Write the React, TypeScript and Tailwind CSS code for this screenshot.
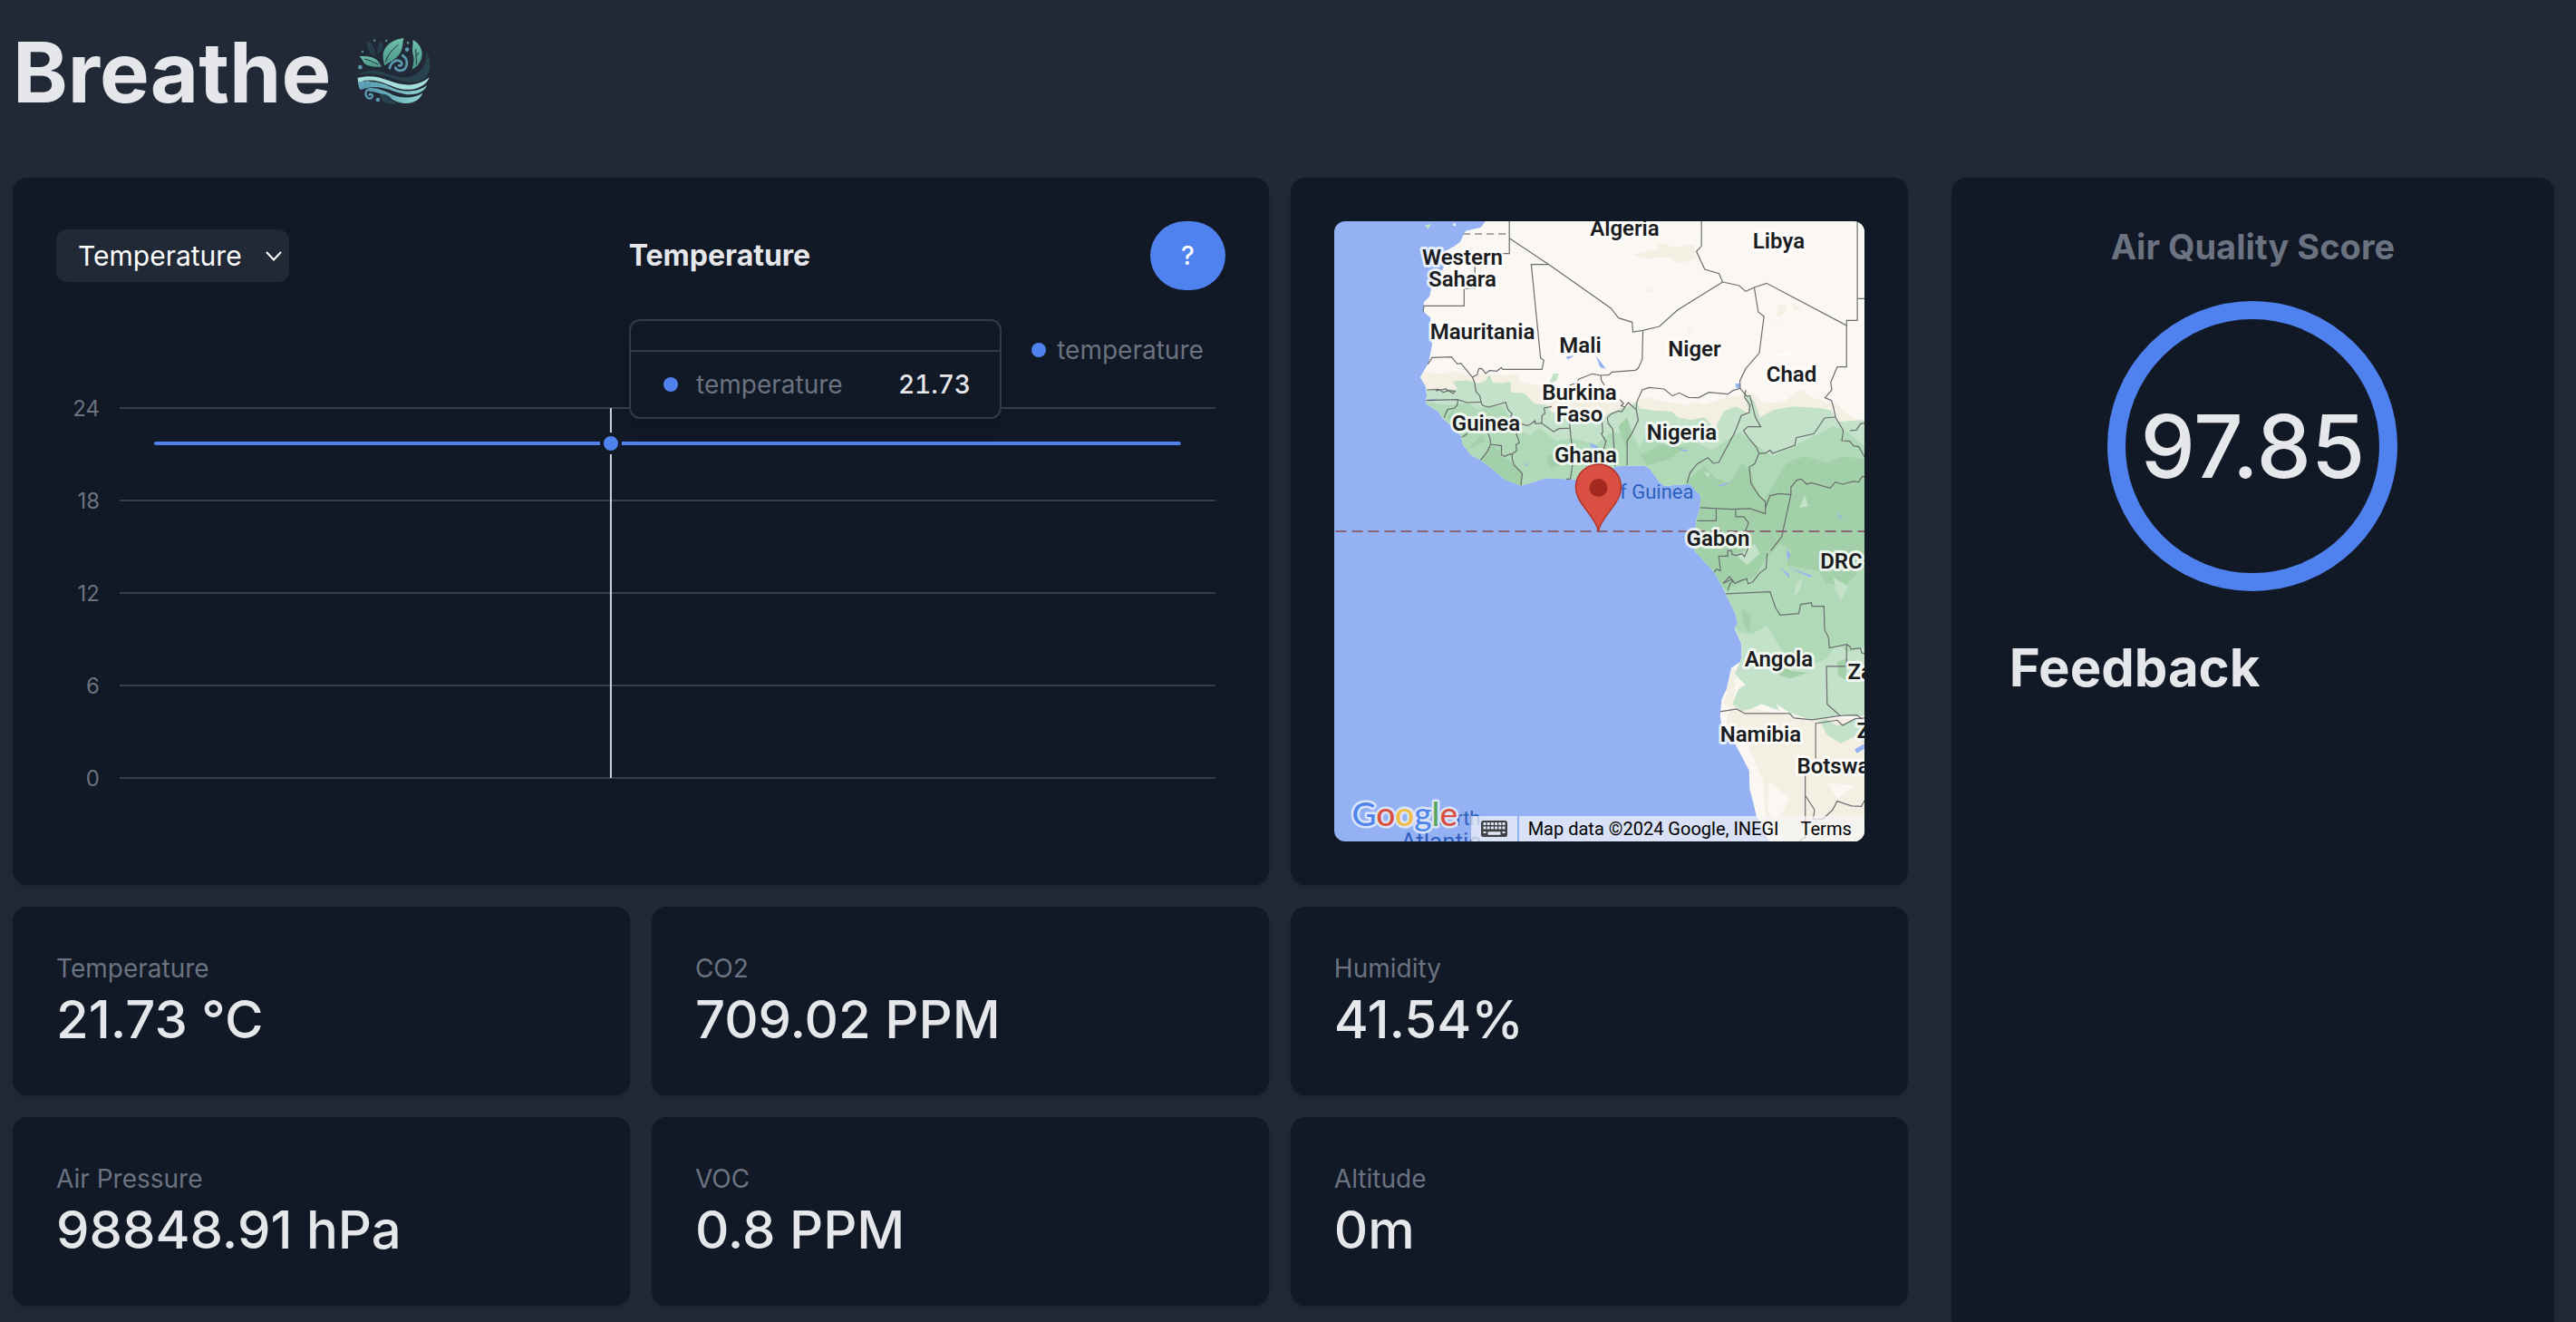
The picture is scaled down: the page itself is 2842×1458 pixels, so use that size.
import { useState } from 'react';

interface Stat {
  label: string;
  value: string;
}

const STATS: Stat[] = [
  { label: 'Temperature', value: '21.73 °C' },
  { label: 'CO2', value: '709.02 PPM' },
  { label: 'Humidity', value: '41.54%' },
  { label: 'Air Pressure', value: '98848.91 hPa' },
  { label: 'VOC', value: '0.8 PPM' },
  { label: 'Altitude', value: '0m' },
];

const METRICS = ['Temperature', 'CO2', 'Humidity', 'Air Pressure', 'VOC', 'Altitude'];

const TICKS = [
  { label: '24', y: 46 },
  { label: '18', y: 148 },
  { label: '12', y: 250 },
  { label: '6', y: 352 },
  { label: '0', y: 454 },
];

const COUNTRIES: { name: string; x: number; y: number; anchor?: 'start' | 'middle' }[] = [
  { name: 'Algeria', x: 321, y: 16 },
  { name: 'Libya', x: 491, y: 30 },
  { name: 'Western', x: 142, y: 48 },
  { name: 'Sahara', x: 142, y: 72 },
  { name: 'Mauritania', x: 164, y: 130 },
  { name: 'Mali', x: 272, y: 145 },
  { name: 'Niger', x: 398, y: 149 },
  { name: 'Chad', x: 505, y: 177 },
  { name: 'Burkina', x: 271, y: 197 },
  { name: 'Faso', x: 271, y: 221 },
  { name: 'Guinea', x: 168, y: 231 },
  { name: 'Nigeria', x: 384, y: 241 },
  { name: 'Ghana', x: 278, y: 266 },
  { name: 'Gabon', x: 424, y: 358 },
  { name: 'DRC', x: 560, y: 383 },
  { name: 'Angola', x: 491, y: 491 },
  { name: 'Zambia', x: 567, y: 505, anchor: 'start' },
  { name: 'Namibia', x: 471, y: 574 },
  { name: 'Zimbabwe', x: 577, y: 570, anchor: 'start' },
  { name: 'Botswana', x: 511, y: 609, anchor: 'start' },
];

const LAND =
  'M450 42L438 62L395 74L380 110L365 124L340 140L345 165L330 205L320 210L300 262L295 290L279 310L277 340L298 362L295 400L302 450L292 510L269 558L285 590L287 620L284 645L320 672L330 692L352 715L383 752L387 780L410 815L437 832L470 862L505 896L549 917L620 892L700 896L760 880L815 853L890 850L908 860L935 905L950 917L1020 911L1050 950L1048 990L1038 1030L1036 1090L1032 1130L1088 1204L1112 1255L1122 1280L1148 1345L1152 1375L1144 1390L1163 1440L1163 1485L1160 1500L1135 1520L1122 1590L1108 1625L1104 1680L1108 1710L1145 1770L1185 1860L1186 1920L1195 1960L1205 2010L1240 2094H1507V42Z';

const BORDERS = [
  'M517 42V149H421V265H391V322H279L277 343',
  'M517 98L627 185L800 330L821 362L859 376L861 408L889 403L935 390L985 336L1111 243L1101 215L1061 201L1038 142L1052 124V42',
  'M627 185H578L604 495L613 502L608 532H498L495 526L482 538L462 536L451 546L440 529L432 530L427 550L414 558L382 512L372 514L356 491L302 493L290 515',
  'M889 403L887 500L876 528L868 535L803 541L795 550L772 552L748 547L710 565L705 577L685 585L683 612M635 655L614 660L616 678L608 685L607 710L640 738L656 728L684 727',
  'M772 552L773 568L782 585',
  'M1111 243L1157 255L1175 274L1199 261L1233 247L1456 387V370H1486V42M1486 298H1507',
  'M1199 261L1210 342L1226 357L1213 478L1175 530L1159 570L1160 595L1140 602L1125 614L1073 608L1044 626L1016 625L990 610L971 620L948 597L906 592L887 600L872 640L870 665L876 700L858 745L845 768V850',
  'M1456 387V524H1430L1412 575L1415 600L1396 626L1414 635L1420 660L1425 690L1447 735L1443 768L1465 770L1475 785L1490 788L1507 824',
  'M1425 690L1395 693L1365 745L1316 758L1312 783L1250 810L1243 800L1229 810L1212 810L1205 790L1185 762L1169 735L1181 722H1217L1202 690L1187 620L1177 620L1160 595',
  'M1175 600L1172 625L1187 650L1185 675L1163 685L1145 740L1100 840L1085 843L1070 824L1040 845L1020 875L1012 908',
  'M1212 810L1200 845L1185 855L1190 910L1212 950L1230 970V1010L1187 993L1135 995L1048 990M1093 993V1033H1040M1147 995V1020L1170 1020L1183 1040L1175 1065L1178 1090',
  'M1230 990L1243 950L1270 943L1301 947L1280 1060L1276 1085L1245 1132M1235 1140L1232 1190L1215 1205L1195 1235L1182 1242L1178 1225L1160 1232L1145 1240L1135 1228L1112 1240',
  'M1301 947L1301 922L1318 898L1330 895L1345 912L1358 907L1410 925L1425 905L1445 912L1475 903L1490 905L1500 886L1507 888',
  'M1465 735L1483 733L1495 712L1507 710',
  'M414 558L420 575L424 605L435 620L438 640L400 642L372 632L285 635M287 600L320 598L333 608L350 602L366 605L360 612L340 597L312 603',
  'M374 632L372 650L365 660L345 665L335 692M438 640L443 652L460 657L507 641L513 665L525 680L520 690L535 700L550 712L565 718L575 715L588 702L590 712L607 710',
  'M545 725L535 740L545 775L535 782L538 800L525 812L512 815L505 820L495 815L495 785L465 780L463 760L458 745M385 757L400 745M465 780L455 805L437 832M525 812L525 830L530 848L553 877L549 917',
  'M684 700L687 740L695 830L687 895L675 895M820 670L800 680L790 692L792 710L805 730L812 853M775 700L777 740L773 745L786 770L780 795',
  'M870 665L848 642L830 672L820 670M825 632L835 645L828 652L840 658',
  'M1088 1204L1093 1193L1105 1198L1100 1150L1125 1150L1125 1132L1135 1132L1138 1145L1150 1148L1165 1142L1172 1152L1183 1120M1112 1240L1130 1218L1140 1232L1132 1240L1125 1265',
  'M1120 1275L1243 1268L1258 1320L1271 1345L1323 1340L1328 1310L1358 1304L1360 1316H1393L1395 1394L1406 1420L1408 1454L1456 1442V1515H1400L1402 1640L1438 1678L1360 1692L1310 1686L1297 1671H1173L1150 1656L1104 1665',
  'M1456 1442L1465 1448L1468 1458L1495 1455L1498 1470L1507 1473M1438 1678L1485 1676L1500 1690M1370 1820V1704L1430 1693L1445 1710L1480 1688L1507 1686',
  'M1341 1870V2080L1325 2094M1341 1942L1367 1990L1363 2020H1390L1417 1990L1430 1961L1470 1977L1497 1978L1507 1958',
];

function BreatheLogo() {
  return (
    <svg viewBox="36 30 250 235" className="h-[78px] w-[83px]" fill="none" aria-hidden="true">
      <defs>
        <linearGradient id="leaf" x1="0" y1="0" x2="0" y2="1">
          <stop offset="0" stopColor="#6cc0aa" />
          <stop offset="1" stopColor="#4b9587" />
        </linearGradient>
        <linearGradient id="wave" x1="0" y1="0" x2="1" y2="0">
          <stop offset="0" stopColor="#5598ad" />
          <stop offset="1" stopColor="#8fd3cf" />
        </linearGradient>
      </defs>
      <g fill="url(#leaf)">
        <path d="M194 36C160 40 126 60 125 96C125 108 128 118 130 128C140 118 172 108 184 82C192 64 190 50 194 36Z" />
        <path d="M224 42C246 52 258 76 254 98C251 118 236 134 222 140C226 120 230 108 225 92C220 74 226 60 224 42Z" />
        <path d="M45 97C70 94 92 98 104 108C112 115 116 124 121 131C100 133 74 132 62 119C56 110 54 101 45 97Z" />
      </g>
      <path d="M176 58C160 72 140 88 134 116M234 72L236 124M236 96L244 84M64 106C80 108 92 116 110 124" stroke="#222936" strokeWidth="3" />
      <path d="M72 44C90 54 100 68 98 96C82 86 70 70 72 44ZM122 46C112 56 102 70 107 90C120 82 127 66 122 46Z" fill="#28434f" />
      <path d="M82 62L94 92M116 62L109 84" stroke="#222936" strokeWidth="2" />
      <path d="M147 136C150 116 172 104 184 114C192 121 186 130 178 127M190 94C206 102 208 124 199 136C190 148 170 146 166 134" stroke="#5a99ae" strokeWidth="8" strokeLinecap="round" />
      <path d="M40 160C66 142 94 140 122 148C156 158 194 176 226 160C258 144 270 120 270 82C284 112 288 150 262 170C224 198 174 174 140 164C108 154 70 150 40 160Z" fill="#28434f" />
      <path d="M41 168C80 158 112 164 146 178C190 196 240 198 279 166C270 194 232 212 190 206C144 198 116 168 56 178C66 184 76 180 92 180C64 184 56 196 50 208C43 196 42 182 41 168Z" fill="#a5dfdc" />
      <path d="M54 190C88 172 126 186 154 200C192 218 244 216 272 192C262 216 232 228 196 222C150 214 112 184 52 208Z" fill="url(#wave)" />
      <path d="M43 180C50 182 64 180 82 178C66 186 56 196 50 208C46 200 43 190 43 180Z" fill="#5f9fb8" />
      <path d="M74 204C100 196 130 212 156 224C188 238 232 236 257 218C246 244 222 256 190 252C152 246 116 210 80 214Z" fill="url(#wave)" />
      <path d="M92 206C74 202 66 212 68 224C71 240 90 240 90 228C90 222 82 220 80 225" stroke="#5a99ae" strokeWidth="7" strokeLinecap="round" />
      <path d="M112 222C136 218 148 230 156 240C160 248 168 252 174 252C152 260 124 252 120 238C118 230 116 226 112 222Z" fill="#28434f" />
      <path d="M130 230L158 248" stroke="#222936" strokeWidth="2" />
      <g fill="#5a99ae">
        <circle cx="49" cy="133" r="7" />
        <circle cx="205" cy="74" r="7" />
        <circle cx="108" cy="241" r="7" />
        <circle cx="57" cy="81" r="3.5" />
        <circle cx="97" cy="44" r="3.5" />
        <circle cx="136" cy="45" r="3.5" />
        <circle cx="208" cy="52" r="4" />
      </g>
    </svg>
  );
}

function TrendChart() {
  return (
    <div className="relative">
      <div className="mt-12 flex items-center justify-end gap-3 pr-6 text-[28px] leading-9 text-[#6b7280]">
        <span className="h-4 w-4 rounded-full bg-[#4f82ee]" />
        temperature
      </div>
      <svg viewBox="0 0 1290 524" className="block w-full" role="img" aria-label="Temperature over time">
        {TICKS.map(tick => (
          <g key={tick.label}>
            <line x1="70" x2="1279" y1={tick.y} y2={tick.y} stroke="#373d4a" strokeWidth="2" />
            <text x="48" y={tick.y + 9} textAnchor="end" fontSize="24" fill="#6b7280">
              {tick.label}
            </text>
          </g>
        ))}
        <line x1="110" x2="1239" y1="85" y2="85" stroke="#4f82ee" strokeWidth="4" strokeLinecap="round" />
        <line x1="612" x2="612" y1="46" y2="454" stroke="#d1d5db" strokeWidth="2" />
        <circle cx="612" cy="85" r="10" fill="#4f82ee" stroke="#111826" strokeWidth="4" />
      </svg>

      {/* Tooltip */}
      <div className="absolute left-[49%] -top-4 w-[411px] rounded-xl border-2 border-[#333a47] bg-[#111826] shadow-lg">
        <div className="h-[34px] border-b-2 border-[#333a47]" />
        <div className="flex items-center py-4 pr-8 pl-9 text-[28px] leading-10">
          <span className="h-4 w-4 rounded-full bg-[#4f82ee]" />
          <span className="ml-5 text-[#6b7280]">temperature</span>
          <span className="ml-auto font-medium text-[#e5e7eb] tabular-nums">21.73</span>
        </div>
      </div>
    </div>
  );
}

function LocationMap() {
  return (
    <div className="relative h-[684px] overflow-hidden rounded-xl bg-[#94b2f3] font-[Roboto,sans-serif]">
      <svg viewBox="0 0 586 684" preserveAspectRatio="xMidYMid slice" className="h-full w-full" role="img" aria-label="Map">
        <defs>
          <clipPath id="land">
            <path d={LAND} />
          </clipPath>
        </defs>
        <g transform="scale(0.3962 0.3333) translate(-28 -42)">
          <path d={LAND} fill="#fbf8f3" />
          <g clipPath="url(#land)">
            {/* Dry belts */}
            <path
              d="M260 558L276 540L330 548L364 538L420 558L432 545L500 552L540 548L545 575L620 590L700 590L770 640L800 640L870 640L900 625L950 640L1010 650L1030 638L1060 650L1120 625L1160 620L1180 600L1225 645L1280 640L1330 598L1350 620L1400 640L1430 650L1470 690L1507 705V780H260ZM1135 1520L1150 1525L1140 1640L1300 1680L1507 1690V2094H1290L1270 2050L1230 2030L1225 1900L1200 1830L1180 1770L1140 1750L1120 1700L1130 1650L1115 1640Z"
              fill="#f4efe3"
            />
            <path d="M862 152L905 140L935 135L925 112L980 128L1030 120L1040 165L990 182L960 160L900 165ZM1265 320L1290 318L1280 350L1262 360ZM1305 310L1330 330L1310 335ZM1248 358L1275 388L1258 372ZM895 268H918L910 276ZM1012 398L1030 410L1015 412ZM1350 1850L1390 1880L1360 1900Z" fill="#f4efe3" />
            <path d="M1240 1900L1300 1950L1260 2030L1235 1990ZM1400 1900L1480 1910L1430 1950Z" fill="#fbf8f3" />
            {/* Vegetation, lightest to densest */}
            <path
              d="M260 645L287 600L330 600L372 598L360 572L400 568L430 578L450 570L462 548L470 575L495 578L520 572L522 608L560 612L585 645L620 650L635 675L690 670L700 690L770 700L790 680L830 660L850 655L872 640L880 662L920 668L970 672L985 690L1020 700L1060 690L1090 728L1115 670L1150 655L1185 680L1172 610L1200 640L1215 690L1255 665L1310 655L1380 660L1412 668L1430 705L1507 700V1680L1440 1676L1360 1692L1300 1670L1260 1640L1270 1662L1220 1640L1190 1655L1165 1662L1138 1640L1155 1590L1175 1575L1160 1560L1145 1540L1160 1500L1120 1500L900 1100L260 800Z"
              fill="#c3e2c9"
            />
            <path d="M628 575L640 545L655 545L648 570L630 580ZM1360 1700L1400 1690L1430 1712L1480 1690L1507 1700V1770L1480 1745L1440 1770L1400 1740L1385 1700Z" fill="#c3e2c9" />
            <path
              d="M280 640L345 650L400 642L430 665L460 650L500 655L515 690L540 735L575 750L600 725L650 770L690 760L760 780L800 740L860 750L880 790L900 740L960 790L1030 770L1080 800L1130 760L1160 740L1200 780L1250 820L1320 780L1420 720L1460 740L1507 790V1450L1460 1470L1430 1440L1400 1490L1340 1520L1280 1470L1235 1380L1190 1410L1155 1400L1100 1300L900 1000L500 950L280 700Z"
              fill="#b0dab7"
            />
            <path
              d="M437 832L465 782L490 800L495 820L520 835L555 880L545 940L480 900ZM820 720L845 690L860 745L840 790ZM1000 915L1060 850L1090 890L1130 910L1165 840L1190 870L1200 920L1225 965L1290 840L1340 820L1400 840L1450 820L1507 830V1180L1450 1250L1400 1240L1380 1200L1290 1180L1300 1130L1270 1110L1230 1160L1200 1220L1120 1260L1020 1140Z"
              fill="#a2d0a8"
            />
            <path d="M345 690L370 655L350 700ZM395 800L440 750L450 770ZM620 820L650 800L660 850L630 860ZM880 815L940 780L1010 790L960 830L900 850ZM1165 1325L1190 1350L1185 1400L1170 1380ZM1235 1470L1300 1530L1350 1535L1300 1555L1270 1545ZM1430 1500L1455 1490V1560L1432 1545Z" fill="#a2d0a8" />
            <path d="M1150 1150L1200 1110L1215 1140L1180 1180ZM1315 1240L1335 1220L1325 1265L1310 1280ZM1420 1220L1460 1250L1440 1300L1425 1260ZM1340 950L1350 985L1325 990ZM1060 870L1075 875L1070 892Z" fill="#c3e2c9" />
            {/* Lakes and rivers */}
            <path d="M675 490L698 487L680 500ZM757 485L786 530L770 525ZM1146 580L1158 578L1160 598L1148 592ZM740 775L765 790L760 798L745 790ZM560 840L568 848L562 852ZM1288 1125L1300 1145L1292 1165ZM1270 1185L1296 1210V1222ZM1290 1185L1360 1215L1355 1220ZM1478 1790L1505 1772V1788L1485 1802ZM1430 1005L1447 1028L1436 1022ZM1095 918L1143 900L1110 918ZM985 795L1018 800L1005 804ZM287 632L320 628L300 638Z" fill="#94b2f3" />
            <path d="M1258 482L1300 474L1296 486L1262 488Z" fill="#ffffff" />
          </g>
          <path d="M282 55L300 52L290 68Z" fill="#c3e2c9" />
          <path d="M358 55L366 46L368 58Z" fill="#fbf8f3" />
          <path d="M388 84H516" fill="none" stroke="#a8a8a8" strokeWidth="2" strokeDasharray="8 5" vectorEffect="non-scaling-stroke" />
          {BORDERS.map(d => (
            <path key={d} d={d} fill="none" stroke="#6b6e70" strokeWidth="1.2" vectorEffect="non-scaling-stroke" />
          ))}
        </g>

        <line x1="2" x2="586" y1="342" y2="342" stroke="#8b6478" strokeWidth="2" strokeDasharray="12 6" />

        <g fontSize="22" fill="#2f5fbd">
          <text x="397" y="306" textAnchor="end">of Guinea</text>
          <text x="162" y="666" textAnchor="end">North</text>
          <text x="74" y="693" fontSize="26">Atlantic</text>
        </g>

        <g fontSize="24" fontWeight="600" fill="#1a1c20" stroke="#ffffff" strokeOpacity="0.8" strokeWidth="6" strokeLinejoin="round" paintOrder="stroke">
          {COUNTRIES.map(c => (
            <text key={c.name} x={c.x} y={c.y} textAnchor={c.anchor ?? 'middle'}>
              {c.name}
            </text>
          ))}
        </g>

        {/* Marker */}
        <path d="M292 342C289 325 267 312 267 293A25 25 0 0 1 317 293C317 312 295 325 292 342Z" fill="#d94f41" stroke="#b3342b" strokeWidth="1.5" />
        <circle cx="292" cy="294" r="10" fill="#a3281f" />

        <g fontFamily="Lato, sans-serif" fontSize="37" fontWeight="500" stroke="#dce5fa" strokeWidth="5" strokeLinejoin="round" paintOrder="stroke">
          <text x="20" y="667">
            <tspan fill="#5086ec">G</tspan>
            <tspan fill="#d9503f">o</tspan>
            <tspan fill="#f1bd42">o</tspan>
            <tspan fill="#5086ec">g</tspan>
            <tspan fill="#58a55c">l</tspan>
            <tspan fill="#d9503f">e</tspan>
          </text>
        </g>
      </svg>

      {/* Attribution strip */}
      <div className="absolute right-0 bottom-0 flex h-7 gap-0.5 text-xl leading-7 text-black">
        <button aria-label="Keyboard shortcuts" className="flex w-[51px] items-center justify-center bg-[#f5f5f5]/70">
          <svg viewBox="0 0 29 18" className="h-[18px] w-[29px]">
            <rect width="29" height="18" rx="2.5" fill="#3c4043" />
            <path d="M2.5 3.5H27M2.5 8H27" stroke="#dfe6f6" strokeWidth="3" strokeDasharray="3 1.2" />
            <path d="M2.5 13H5.5M23.5 13H26.5" stroke="#dfe6f6" strokeWidth="2" />
            <path d="M7.5 14H21.5" stroke="#dfe6f6" strokeWidth="3.6" />
          </svg>
        </button>
        <div className="flex gap-6 bg-[#f5f5f5]/70 pr-3.5 pl-2.5">
          <span>Map data ©2024 Google, INEGI</span>
          <a href="#terms">Terms</a>
        </div>
      </div>
    </div>
  );
}

function StatCard({ label, value }: Stat) {
  return (
    <div className="rounded-2xl bg-[#111826] p-12 shadow-md">
      <p className="text-[28px] leading-10 text-[#6b7280]">{label}</p>
      <p className="text-[58px] leading-[72px] font-medium">{value}</p>
    </div>
  );
}

export default function App() {
  const [metric, setMetric] = useState('Temperature');

  return (
    <div className="flex min-h-screen flex-col bg-[#222936] pr-6 pl-[14px] font-[Inter,sans-serif] text-[#e5e7eb]">
      <header className="flex h-[196px] items-start gap-7 pt-8">
        <h1 className="text-[92px] leading-[96px] font-bold">Breathe</h1>
        <div className="pt-2">
          <BreatheLogo />
        </div>
      </header>

      <main className="grid flex-1 grid-cols-[22fr_7fr] gap-12">
        <div className="grid grid-cols-3 content-start gap-6">
          <section className="col-span-2 rounded-2xl bg-[#111826] p-12 shadow-md">
            <div className="flex items-center justify-between">
              <div className="relative">
                <select
                  aria-label="Metric"
                  value={metric}
                  onChange={e => setMetric(e.target.value)}
                  className="h-[58px] w-[257px] appearance-none rounded-xl bg-[#222936] pl-6 text-[30px] text-white"
                >
                  {METRICS.map(m => (
                    <option key={m}>{m}</option>
                  ))}
                </select>
                <svg viewBox="0 0 18 11" className="pointer-events-none absolute top-6 right-2 h-[11px] w-[18px]" fill="none">
                  <path d="M1 1L9 9.5L17 1" stroke="#ffffff" strokeWidth="2" />
                </svg>
              </div>
              <h2 className="text-[32px] leading-10 font-bold">{metric}</h2>
              <button className="h-[76px] w-[83px] rounded-full bg-[#4f82ee] text-[28px] font-medium text-white">?</button>
            </div>
            <TrendChart />
          </section>

          <section className="rounded-2xl bg-[#111826] p-12 shadow-md">
            <LocationMap />
          </section>

          {STATS.map(stat => (
            <StatCard key={stat.label} label={stat.label} value={stat.value} />
          ))}
        </div>

        <aside className="rounded-t-2xl bg-[#111826] px-16 pt-12 shadow-md">
          <div className="flex flex-col items-center">
            <h2 className="text-[38px] leading-[56px] font-bold text-[#6b7280]">Air Quality Score</h2>
            <div className="mt-8 flex h-80 w-80 items-center justify-center rounded-full border-[20px] border-[#4f82ee] text-[96px] font-medium">
              97.85
            </div>
          </div>
          <h2 className="mt-12 text-[58px] leading-[72px] font-bold">Feedback</h2>
        </aside>
      </main>
    </div>
  );
}
